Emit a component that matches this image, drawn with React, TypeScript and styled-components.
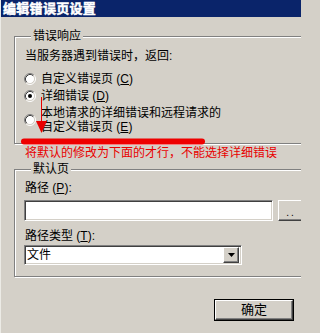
import React from "react";
import styled, { createGlobalStyle } from "styled-components";

const Global = createGlobalStyle`
  html, body { margin: 0; padding: 0; background: #d4d0c8; }
  body { font-family: "Liberation Sans", "Noto Sans CJK SC", sans-serif; font-size: 12px; color: #000; }
`;

const Window = styled.div`
  position: relative;
  width: 301px;
  height: 333px;
  overflow: hidden;
  background: #d4d0c8;
  border-left: 1px solid #ecebe6;
  box-sizing: border-box;
`;

const TitleBar = styled.div`
  height: 17px;
  background: #0a246a;
  color: #fff;
  font-weight: bold;
  font-size: 13px;
  line-height: 17px;
  padding-left: 2px;
  white-space: nowrap;
  -webkit-text-stroke: 0.5px #fff;
  letter-spacing: 0.3px;
`;

const Body = styled.div`
  padding-left: 13px;
  display: flex;
  flex-direction: column;
`;

const Group = styled.fieldset<{ $top: number; $pt: number; $pb: number }>`
  margin: ${(p) => p.$top}px -40px 0 0;
  padding: ${(p) => p.$pt}px 9px ${(p) => p.$pb}px 9px;
  border: 1px solid #808080;
  box-shadow: 1px 1px 0 #fff, inset 1px 1px 0 #fff;
  min-width: 0;
  display: flex;
  flex-direction: column;
  align-items: flex-start;
`;

const Legend = styled.legend`
  margin-left: 7px;
  padding: 0 2px;
  font-size: 12px;
  line-height: 14px;
  background: #d4d0c8;
  position: relative;
`;

const Text = styled.div<{ $mt?: number }>`
  line-height: 14px;
  margin-top: ${(p) => p.$mt ?? 0}px;
  padding-left: 1px;
  white-space: nowrap;
`;

const RadioRow = styled.div<{ $mt: number; $h: number }>`
  display: flex;
  align-items: center;
  gap: 5px;
  height: ${(p) => p.$h}px;
  margin-top: ${(p) => p.$mt}px;
`;

const RadioLabel = styled.div`
  line-height: 14px;
  white-space: nowrap;
`;

const LabelLine = styled.div`
  line-height: 14px;
  white-space: nowrap;
`;

const Note = styled.div`
  color: #e80000;
  line-height: 14px;
  margin: 2px 0 0 11px;
  white-space: nowrap;
`;

const InputRow = styled.div<{ $mt: number }>`
  display: flex;
  gap: 5px;
  margin-top: ${(p) => p.$mt}px;
`;

const Sunken = styled.div<{ $w: number; $h: number }>`
  box-sizing: border-box;
  width: ${(p) => p.$w}px;
  height: ${(p) => p.$h}px;
  background: #fff;
  border-top: 1px solid #808080;
  border-left: 1px solid #808080;
  border-bottom: 1px solid #fff;
  border-right: 1px solid #fff;
  box-shadow: inset 1px 1px 0 #404040, inset -1px -1px 0 #d4d0c8;
  display: flex;
  align-items: center;
  justify-content: space-between;
  padding: 2px;
`;

const SelectText = styled.span`
  line-height: 14px;
`;

const Raised = styled.div<{ $w: number; $h: number }>`
  box-sizing: border-box;
  width: ${(p) => p.$w}px;
  height: ${(p) => p.$h}px;
  flex: none;
  background: #d4d0c8;
  border-top: 1px solid #fff;
  border-left: 1px solid #fff;
  border-bottom: 1px solid #404040;
  border-right: 1px solid #404040;
  box-shadow: inset -1px -1px 0 #808080, inset 1px 1px 0 #d4d0c8;
  display: flex;
  align-items: center;
  justify-content: center;
`;

const Dots = styled.span`
  font-size: 10px;
  letter-spacing: 2px;
  line-height: 10px;
  margin-top: 4px;
`;

const Footer = styled.div`
  display: flex;
  justify-content: flex-end;
  padding-right: 7px;
  margin-top: 22px;
`;

const OkButton = styled.div`
  box-sizing: border-box;
  width: 80px;
  height: 22px;
  border: 1px solid #000;
  display: flex;
`;

const OkInner = styled.div`
  flex: 1;
  border-top: 1px solid #fff;
  border-left: 1px solid #fff;
  border-bottom: 1px solid #404040;
  border-right: 1px solid #404040;
  box-shadow: inset -1px -1px 0 #808080;
  display: flex;
  align-items: center;
  justify-content: center;
  line-height: 14px;
  font-size: 13px;
`;

const Overlay = styled.svg`
  position: absolute;
  left: 0;
  top: 0;
  pointer-events: none;
`;

const Radio = ({ checked }: { checked?: boolean }) => (
  <svg width="12" height="12" viewBox="0 0 12 12" style={{ flex: "none" }}>
    <circle cx="6" cy="6" r="4.5" fill="#fff" />
    <path d="M2.11 9.89 A5.5 5.5 0 0 1 9.89 2.11" stroke="#808080" fill="none" />
    <path d="M9.89 2.11 A5.5 5.5 0 0 1 2.11 9.89" stroke="#fff" fill="none" />
    <path d="M2.82 9.18 A4.5 4.5 0 0 1 9.18 2.82" stroke="#404040" fill="none" />
    <path d="M9.18 2.82 A4.5 4.5 0 0 1 2.82 9.18" stroke="#d4d0c8" fill="none" />
    {checked && <circle cx="6" cy="6" r="2" fill="#000" />}
  </svg>
);

const Key = ({ k }: { k: string }) => (
  <>
    {" ("}
    <u>{k}</u>
    {")"}
  </>
);

export default function App() {
  return (
    <>
      <Global />
      <Window>
        <TitleBar>编辑错误页设置</TitleBar>
        <Body>
          <Group $top={12} $pt={6} $pb={9}>
            <Legend>错误响应</Legend>
            <Text>当服务器遇到错误时，返回:</Text>
            <RadioRow $mt={7} $h={17}>
              <Radio />
              <RadioLabel>
                自定义错误页<Key k="C" />
              </RadioLabel>
            </RadioRow>
            <RadioRow $mt={0} $h={17}>
              <Radio checked />
              <RadioLabel>
                详细错误<Key k="D" />
              </RadioLabel>
            </RadioRow>
            <RadioRow $mt={2} $h={28}>
              <Radio />
              <div>
                <LabelLine>本地请求的详细错误和远程请求的</LabelLine>
                <LabelLine>
                  自定义错误页<Key k="E" />
                </LabelLine>
              </div>
            </RadioRow>
          </Group>
          <Note>将默认的修改为下面的才行，不能选择详细错误</Note>
          <Group $top={2} $pt={5} $pb={11}>
            <Legend>默认页</Legend>
            <Text>
              路径<Key k="P" />:
            </Text>
            <InputRow $mt={5}>
              <Sunken $w={249} $h={21} />
              <Raised $w={26} $h={21}>
                <Dots>..</Dots>
              </Raised>
            </InputRow>
            <Text $mt={8}>
              路径类型<Key k="T" />:
            </Text>
            <InputRow $mt={2}>
              <Sunken $w={218} $h={20}>
                <SelectText>文件</SelectText>
                <Raised $w={16} $h={16}>
                  <svg width="7" height="4" viewBox="0 0 7 4">
                    <path d="M0 0H7L3.5 4Z" fill="#000" />
                  </svg>
                </Raised>
              </Sunken>
            </InputRow>
          </Group>
          <Footer>
            <OkButton>
              <OkInner>确定</OkInner>
            </OkButton>
          </Footer>
        </Body>
        <Overlay width="301" height="333" viewBox="0 0 301 333">
          <line x1="40.5" y1="97" x2="40.5" y2="122" stroke="#e80000" strokeWidth="1" />
          <path d="M35 121 H46 L40.5 133 Z" fill="#e80000" />
          <line x1="23" y1="141.5" x2="201" y2="141.5" stroke="#ee0000" strokeWidth="6" strokeLinecap="round" />
        </Overlay>
      </Window>
    </>
  );
}
